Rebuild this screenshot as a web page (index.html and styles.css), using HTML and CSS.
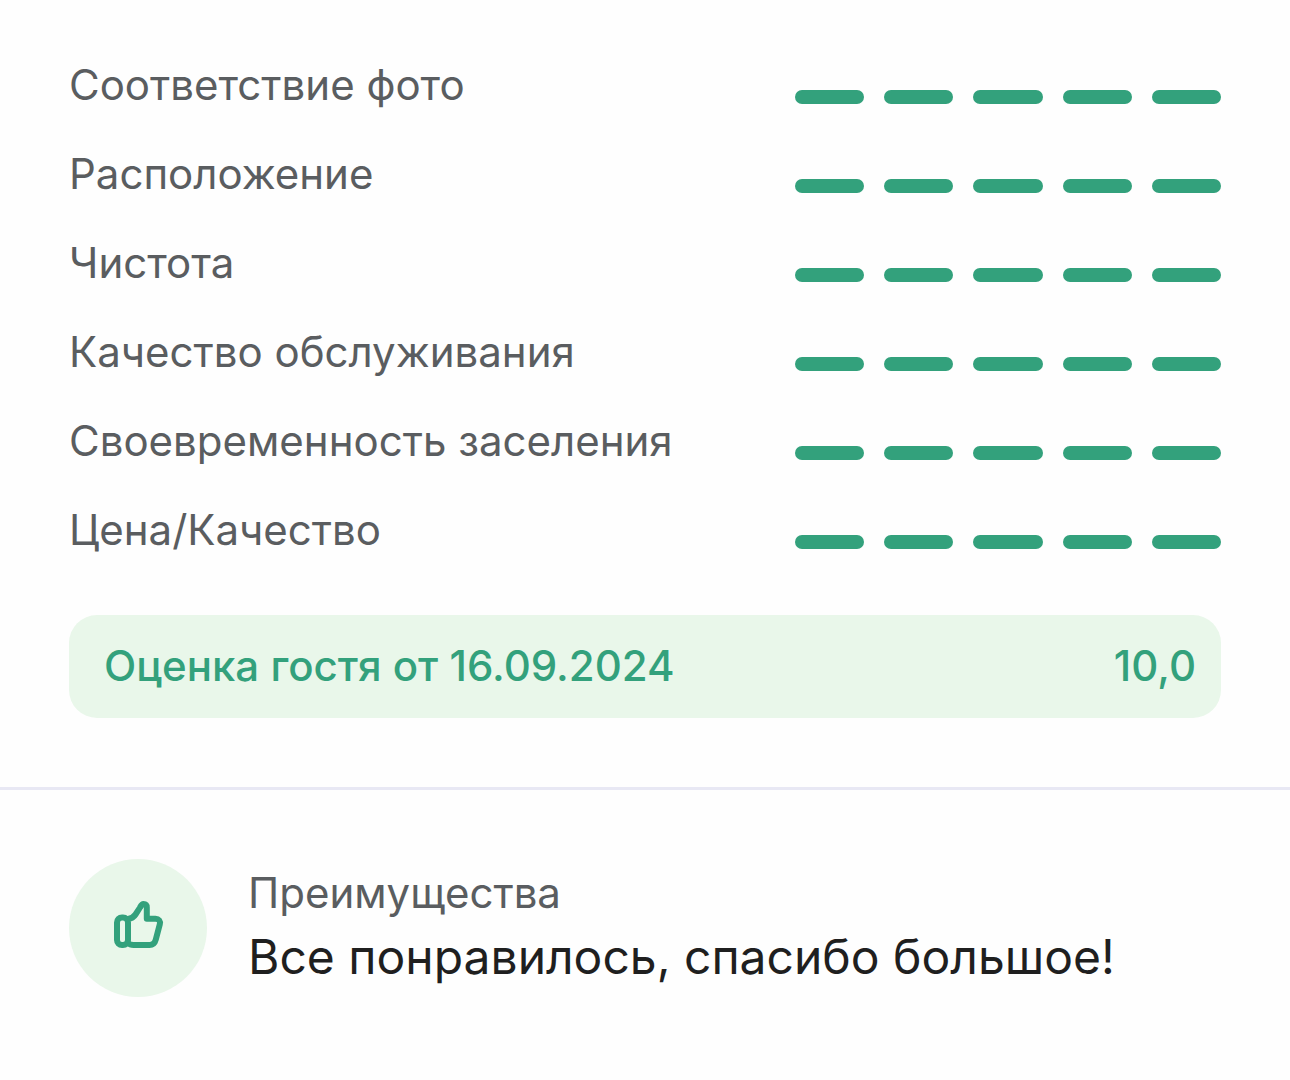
FILE: index.html
```html
<!DOCTYPE html>
<html lang="ru">
<head>
  <meta charset="UTF-8" />
  <meta name="viewport" content="width=device-width, initial-scale=1.0"/>
  <title>Оценка гостя</title>
  <link rel="stylesheet" href="styles.css">
</head>
<body>
  <section class="ratings">
    <ul class="rating-list">
      <li class="rating">
        <span>Соответствие фото</span>
        <div class="bars"><i></i><i></i><i></i><i></i><i></i></div>
      </li>
      <li class="rating">
        <span>Расположение</span>
        <div class="bars"><i></i><i></i><i></i><i></i><i></i></div>
      </li>
      <li class="rating">
        <span>Чистота</span>
        <div class="bars"><i></i><i></i><i></i><i></i><i></i></div>
      </li>
      <li class="rating">
        <span>Качество обслуживания</span>
        <div class="bars"><i></i><i></i><i></i><i></i><i></i></div>
      </li>
      <li class="rating">
        <span>Своевременность заселения</span>
        <div class="bars"><i></i><i></i><i></i><i></i><i></i></div>
      </li>
      <li class="rating">
        <span>Цена/Качество</span>
        <div class="bars"><i></i><i></i><i></i><i></i><i></i></div>
      </li>
    </ul>

    <div class="total">
      <span>Оценка гостя от 16.09.2024</span>
      <span>10,0</span>
    </div>
  </section>

  <section class="review">
    <div class="review-icon">
      <svg viewBox="0 0 160 160" aria-hidden="true">
        <rect x="57" y="67.500" width="11" height="27.500" rx="5"/>
        <path d="M68 69C71.500 68.500 73.500 67.500 75.500 64.500L80 57.500C81.200 55.200 82 54 83.500 54C85.600 54 86.800 55.300 86.800 57.500V68.700H95.500C98.800 68.700 100.600 71 99.800 74.300L95.800 89.500C94.800 93.300 93 95 89.500 95H73.500C71 95 69.500 94.500 68 93"/>
      </svg>
    </div>
    <div class="review-body">
      <h2>Преимущества</h2>
      <p>Все понравилось, спасибо большое!</p>
    </div>
  </section>
</body>
</html>
```

FILE: styles.css
```css
:root {
  --green:       #33a17c;
  --green-light: #e9f7ea;
  --gray:        #5a5d60;
  --black:       #1f1f1f;
  --line:        #e8e8f4;
}
* { box-sizing: border-box; margin: 0; padding: 0; }
body {
  background: #fefefe;
  color: var(--gray);
  font-family: Inter, sans-serif;
  font-size: 42px;
  line-height: 48px;
}

/* ratings */
.ratings {
  padding: 61px 69px 69px;
  border-bottom: 3px solid var(--line);
}
.rating-list {
  display: grid;
  gap: 41px;
  list-style: none;
}
.rating {
  display: flex;
  justify-content: space-between;
  align-items: flex-end;
}
.bars {
  display: grid;
  grid-template-columns: repeat(5, 1fr);
  gap: 20px;
  width: 426px;
  padding-bottom: 5px;
}
.bars i {
  height: 14px;
  border-radius: 7px;
  background: var(--green);
}
.total {
  display: flex;
  justify-content: space-between;
  margin-top: 61px;
  padding: 27px 25px 28px 35px;
  border-radius: 28px;
  background: var(--green-light);
  color: var(--green);
  font-weight: 500;
}

/* review */
.review {
  display: flex;
  align-items: center;
  gap: 41px;
  padding: 69px;
}
.review-icon {
  flex: none;
  width: 138px;
  height: 138px;
  border-radius: 50%;
  background: var(--green-light);
}
.review-icon svg {
  display: block;
  width: 160px;
  height: 160px;
  margin: -9px;
  fill: none;
  stroke: var(--green);
  stroke-width: 6;
  stroke-linecap: round;
  stroke-linejoin: round;
}
.review-body {
  padding-bottom: 3px;
}
.review-body h2 {
  font-size: 42px;
  font-weight: 400;
  line-height: 60px;
}
.review-body p {
  color: var(--black);
  font-size: 48px;
  line-height: 68px;
}
```
